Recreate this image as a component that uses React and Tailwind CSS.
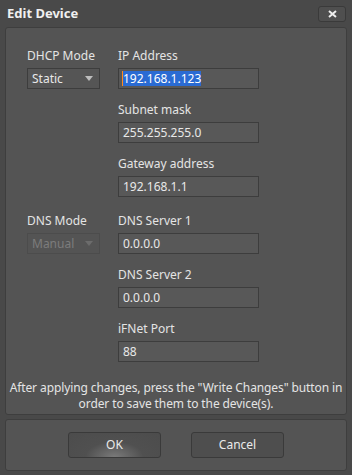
export default function App() {
  const font = { fontFamily: '"Noto Sans", "Open Sans", sans-serif' };

  const Field = ({ label, value, selected }) => (
    <div className="flex flex-col gap-[4px]">
      <div className="h-[16px] leading-[16px] text-[12px] text-[#e4e4e4]">{label}</div>
      <div className="h-[21px] w-[141px] border border-[#3d3d3d] bg-[#585858] flex items-center pl-[3px] text-[12px] text-[#e8e8e8]">
        {selected ? (
          <>
            <span className="w-[1px] h-[15px] bg-[#ff8a1c]" />
            <span className="bg-[#2a6bd3] text-white leading-[15px]">{value}</span>
          </>
        ) : (
          <span className="pl-[1px]">{value}</span>
        )}
      </div>
    </div>
  );

  const Select = ({ label, value, disabled }) => (
    <div className="flex flex-col gap-[4px]">
      <div className="h-[16px] leading-[16px] text-[12px] text-[#e4e4e4]">{label}</div>
      <div
        className={`h-[21px] w-[73px] border flex items-center justify-between pl-[4px] pr-[6px] text-[12px] ${
          disabled ? "border-[#4c4c4c] text-[#7c7c7c]" : "border-[#3d3d3d] bg-[#555555] text-[#e8e8e8]"
        }`}
      >
        <span>{value}</span>
        <svg width="8" height="5" viewBox="0 0 8 5">
          <path d="M0 0 L8 0 L4 5 Z" fill={disabled ? "#6c6c6c" : "#bdbdbd"} />
        </svg>
      </div>
    </div>
  );

  return (
    <div className="w-[352px] h-[475px] bg-[#494949] flex flex-col select-none" style={font}>
      <div className="h-[27px] flex items-center justify-between pl-[7px] pr-[6px] shrink-0">
        <span className="text-[13px] font-bold text-[#f0f0f0]">Edit Device</span>
        <div className="w-[28px] h-[16px] rounded-[3px] border border-[#3a3a3a] bg-[#4f4f4f] flex items-center justify-center">
          <svg width="9" height="8" viewBox="0 0 9 8">
            <path d="M1 1 L8 7 M8 1 L1 7" stroke="#eeeeee" strokeWidth="2" />
          </svg>
        </div>
      </div>

      <div className="mx-[5px] h-[388px] rounded-[3px] border border-[#3e3e3e] bg-[#545454] pt-[20px] shrink-0">
        <div className="grid grid-cols-[73px_141px] gap-x-[18px] pl-[21px]">
          <Select label="DHCP Mode" value="Static" />
          <Field label="IP Address" value="192.168.1.123" selected />
          <div />
          <div className="pt-[13px]">
            <Field label="Subnet mask" value="255.255.255.0" />
          </div>
          <div />
          <div className="pt-[13px]">
            <Field label="Gateway address" value="192.168.1.1" />
          </div>
          <div className="pt-[16px]">
            <Select label="DNS Mode" value="Manual" disabled />
          </div>
          <div className="pt-[16px]">
            <Field label="DNS Server 1" value="0.0.0.0" />
          </div>
          <div />
          <div className="pt-[13px]">
            <Field label="DNS Server 2" value="0.0.0.0" />
          </div>
          <div />
          <div className="pt-[13px]">
            <Field label="iFNet Port" value="88" />
          </div>
        </div>
        <p className="mt-[18px] text-center text-[12px] tracking-[-0.1px] leading-[16px] text-[#e4e4e4]">
          After applying changes, press the "Write Changes" button in order to save them to the device(s).
        </p>
      </div>

      <div className="mx-[5px] mt-[4px] h-[52px] rounded-[3px] border border-[#3e3e3e] bg-[#545454] flex items-center justify-center gap-[30px] shrink-0">
        <button className="w-[93px] h-[26px] rounded-[3px] border border-[#3a3a3a] text-[12px] text-[#eaeaea] bg-[radial-gradient(ellipse_at_50%_100%,#7a7a7a_0%,#505050_45%,#4c4c4c_100%)]">
          OK
        </button>
        <button className="w-[93px] h-[26px] rounded-[3px] border border-[#3a3a3a] bg-[#4e4e4e] text-[12px] text-[#eaeaea]">
          Cancel
        </button>
      </div>
    </div>
  );
}
